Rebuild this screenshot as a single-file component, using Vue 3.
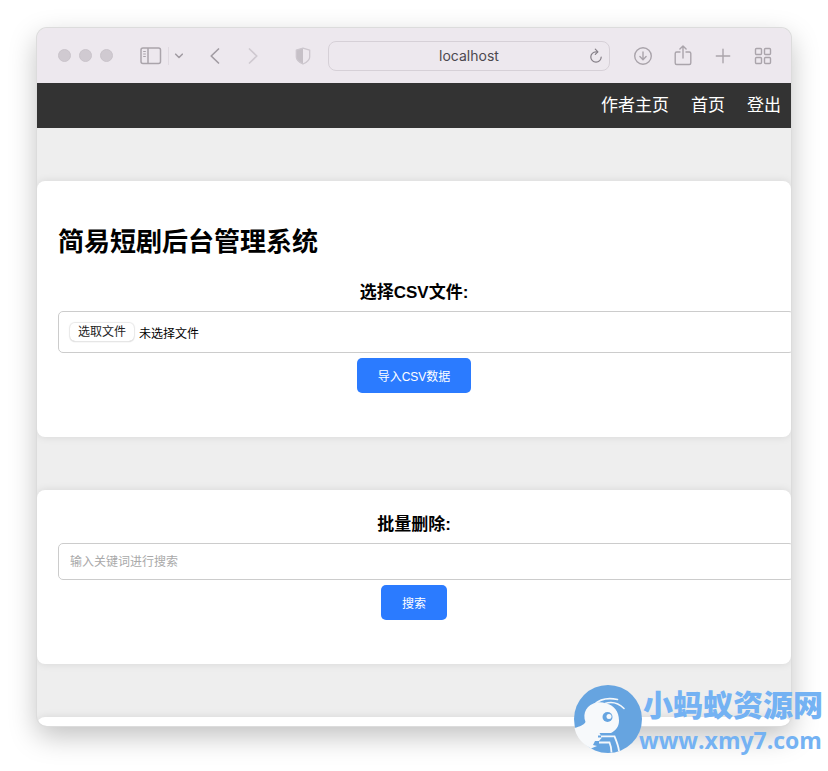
<script setup>
import { ref } from 'vue'

const navLinks = ['作者主页', '首页', '登出']
const fileName = ref('未选择文件')
const keyword = ref('')

function onFileChange(event) {
  const file = event.target.files[0]
  fileName.value = file ? file.name : '未选择文件'
}
</script>

<template>
  <div class="desktop">
    <div class="window">
      <header class="toolbar">
        <div class="lights"><i></i><i></i><i></i></div>
        <button class="tool sidebar" type="button" aria-label="边栏">
          <svg width="22" height="18" viewBox="0 0 22 18" fill="none" stroke="#aaa4ab" stroke-width="1.5">
            <rect x="1" y="1" width="19.5" height="15.5" rx="2" />
            <path d="M8 1v15.5" />
            <path d="M3.2 4.5h2.6M3.2 7h2.6M3.2 9.5h2.6" stroke-width="1" />
          </svg>
        </button>
        <span class="divider"></span>
        <button class="tool chevron" type="button" aria-label="标签页组">
          <svg width="10" height="8" viewBox="0 0 10 8" fill="none" stroke="#a29ca3" stroke-width="1.6" stroke-linecap="round" stroke-linejoin="round">
            <path d="M1.7 2.2 5 5.5l3.3-3.3" />
          </svg>
        </button>
        <button class="tool back" type="button" aria-label="后退">
          <svg width="12" height="18" viewBox="0 0 12 18" fill="none" stroke="#a29ca3" stroke-width="1.7" stroke-linecap="round" stroke-linejoin="round">
            <path d="M9.5 2 2.2 9l7.3 7" />
          </svg>
        </button>
        <button class="tool forward" type="button" aria-label="前进">
          <svg width="12" height="18" viewBox="0 0 12 18" fill="none" stroke="#cfc9d0" stroke-width="1.7" stroke-linecap="round" stroke-linejoin="round">
            <path d="M2.5 2 9.8 9l-7.3 7" />
          </svg>
        </button>
        <button class="tool shield" type="button" aria-label="隐私报告">
          <svg width="16" height="18" viewBox="0 0 16 18">
            <path d="M8 1 1.2 3v7c0 3.400 3 5.500 6.800 7.200z" fill="#c6c0c7" />
            <path d="M8 1.200 14.700 3.200v6.800c0 3.200-3 5.300-6.700 7-3.700-1.700-6.700-3.800-6.700-7V3.200z" fill="none" stroke="#cdc7ce" stroke-width="1.300" stroke-linejoin="round" />
          </svg>
        </button>
        <div class="address">
          <span class="host">localhost</span>
          <button class="tool" type="button" aria-label="重新载入">
            <svg width="14" height="16" viewBox="0 0 14 16" fill="none" stroke="#847e86" stroke-width="1.2" stroke-linecap="round" stroke-linejoin="round">
              <path d="M8.300 3.800H7a5.200 5.200 0 1 0 5.200 5.200" />
              <path d="M6.300 1.200 8.900 3.800 6.300 6.400" />
            </svg>
          </button>
        </div>
        <div class="actions">
          <button class="tool" type="button" aria-label="下载">
            <svg width="20" height="22" viewBox="0 0 20 22" fill="none" stroke="#aaa4ab" stroke-width="1.4" stroke-linecap="round" stroke-linejoin="round">
              <circle cx="10" cy="11" r="8.300" />
              <path d="M10 7v7.500M6.900 11.600 10 14.700l3.100-3.100" />
            </svg>
          </button>
          <button class="tool" type="button" aria-label="分享">
            <svg width="20" height="22" viewBox="0 0 20 22" fill="none" stroke="#aaa4ab" stroke-width="1.4" stroke-linecap="round" stroke-linejoin="round">
              <path d="M7 7H3.700a1.500 1.500 0 0 0-1.500 1.500v9.500a1.500 1.500 0 0 0 1.500 1.500h12.600a1.500 1.500 0 0 0 1.500-1.500V8.500A1.500 1.500 0 0 0 16.300 7H13" />
              <path d="M10 13V1.200M6.900 4.100 10 1l3.100 3.100" />
            </svg>
          </button>
          <button class="tool" type="button" aria-label="新标签页">
            <svg width="20" height="22" viewBox="0 0 20 22" fill="none" stroke="#aaa4ab" stroke-width="1.4" stroke-linecap="round">
              <path d="M10 4.300v13.400M3.300 11h13.400" />
            </svg>
          </button>
          <button class="tool" type="button" aria-label="标签页概览">
            <svg width="20" height="22" viewBox="0 0 20 22" fill="none" stroke="#aaa4ab" stroke-width="1.4">
              <rect x="2.500" y="3.500" width="6" height="6" rx="1" />
              <rect x="11.500" y="3.500" width="6" height="6" rx="1" />
              <rect x="2.500" y="12.500" width="6" height="6" rx="1" />
              <rect x="11.500" y="12.500" width="6" height="6" rx="1" />
            </svg>
          </button>
        </div>
      </header>

      <nav class="nav">
        <a v-for="link in navLinks" :key="link" href="#">{{ link }}</a>
      </nav>

      <main class="content">
        <section class="card import">
          <h1>简易短剧后台管理系统</h1>
          <form class="form" @submit.prevent>
            <label class="title" for="csv">选择CSV文件:</label>
            <div class="field file">
              <input id="csv" class="native-file" type="file" accept=".csv" @change="onFileChange" />
              <label class="pick" for="csv">选取文件</label>
              <span>{{ fileName }}</span>
            </div>
            <button class="primary" type="submit">导入CSV数据</button>
          </form>
        </section>

        <section class="card remove">
          <form class="form" @submit.prevent>
            <label class="title" for="keyword">批量删除:</label>
            <input id="keyword" v-model="keyword" class="field text" type="text" placeholder="输入关键词进行搜索" />
            <button class="primary" type="submit">搜索</button>
          </form>
        </section>

        <section class="card next"></section>
      </main>
    </div>

    <div class="watermark">
      <svg width="70" height="70" viewBox="0 0 70 70">
        <circle cx="35" cy="35" r="34" fill="#66a4e0" />
        <path d="M1.500 44C7 42.500 11 41 12.500 38 9 29 14 20 24 18.500c3-.6 6-.2 9 1 8 1.500 13 8 13 17 0 6-3 10-8 12.500H26.500l1.500 2.500h-3v2h4L26 57h-4l-2 4 4 1-6 2.500-4-2.500C7 57.500 3 51 1.500 44z" fill="#f7f9fb" />
        <path d="M21 20.500C27 15 35 13.500 44.500 15.500M32 19.500c8-2.500 14 0 19 5" fill="none" stroke="#f3f7fb" stroke-width="1.600" stroke-linecap="round" />
        <path d="M28 52.300H41.500C43.500 57 45.500 62 46 67M26 58.500H36.500C38 62 38.500 65 38.500 68.500" fill="none" stroke="#f3f7fb" stroke-width="1.800" />
        <circle cx="34.500" cy="33" r="5" fill="#66a4e0" />
        <circle cx="36" cy="32.500" r="2.500" fill="#f7f9fb" />
      </svg>
      <div class="mark-text">
        <strong>小蚂蚁资源网</strong>
        <span>www.xmy7.com</span>
      </div>
    </div>
  </div>
</template>

<style>
body {
  margin: 0;
  background: #fff;
}
</style>

<style scoped>
.desktop {
  position: relative;
  box-sizing: border-box;
  min-height: 100vh;
  padding: 28px 37px 45px;
  overflow: hidden;
  font-family: "Liberation Sans", "Noto Sans CJK SC", sans-serif;
  color: #000;
}

.window {
  overflow: hidden;
  border-radius: 10px;
  background: #eee;
  box-shadow: 0 0 0 1px #dcdcdc, 0 10px 28px rgba(0, 0, 0, 0.25);
}

button {
  border: 0;
  font-family: inherit;
  cursor: pointer;
}

.toolbar {
  display: flex;
  align-items: center;
  height: 55px;
  padding: 0 18px 0 21px;
  box-sizing: border-box;
  background: #ede8ee;
}

.lights {
  display: flex;
  gap: 8px;
  margin-right: 27px;
}

.lights i {
  width: 13px;
  height: 13px;
  border: 1px solid #cac4cb;
  border-radius: 50%;
  box-sizing: border-box;
  background: #d0cad1;
}

.tool {
  display: flex;
  flex: none;
  padding: 0;
  background: none;
}

.divider {
  width: 1px;
  height: 18px;
  margin: 0 5px 0 6px;
  background: #e0dae1;
}

.back {
  margin-left: 25px;
}

.forward {
  margin-left: 26px;
}

.shield {
  margin: 0 17px 0 36px;
}

.address {
  display: flex;
  flex: 1;
  align-items: center;
  height: 30px;
  padding: 0 6px 0 20px;
  border: 1px solid #d6d0d7;
  border-radius: 8px;
  box-sizing: border-box;
}

.host {
  flex: 1;
  font: 14px Inter, sans-serif;
  text-align: center;
  color: #4c484e;
}

.actions {
  display: flex;
  gap: 20px;
  margin-left: 23px;
}

.nav {
  display: flex;
  justify-content: flex-end;
  align-items: center;
  gap: 22px;
  height: 45px;
  padding: 0 10px;
  background: #333;
}

.nav a {
  font-size: 17px;
  line-height: 24px;
  color: #fff;
  text-decoration: none;
}

.content {
  display: flex;
  flex-direction: column;
  gap: 53px;
  padding-top: 53px;
}

.card {
  padding: 0 21px;
  border-radius: 8px;
  background: #fff;
  box-shadow: 0 0 8px rgba(0, 0, 0, 0.1);
}

.import {
  padding-top: 43px;
  padding-bottom: 44px;
}

.remove {
  padding-top: 23px;
  padding-bottom: 44px;
}

.next {
  height: 9px;
  border-radius: 8px 8px 0 0;
}

h1 {
  margin: 0 0 21px;
  font-size: 26px;
  line-height: 36px;
}

.form {
  display: flex;
  flex-direction: column;
  align-items: center;
}

.title {
  margin-bottom: 6px;
  font-size: 17px;
  font-weight: bold;
  line-height: 24px;
}

.field {
  align-self: flex-start;
  width: calc(100% + 24px);
  margin: 0 0 5px;
  padding: 0 11px;
  border: 1px solid #ccc;
  border-radius: 5px;
  box-sizing: border-box;
  background: #fff;
  font-family: inherit;
  font-size: 12px;
}

.file {
  display: flex;
  align-items: center;
  gap: 5px;
  height: 42px;
}

.native-file {
  position: absolute;
  width: 1px;
  height: 1px;
  opacity: 0;
}

.pick {
  padding: 0 8px;
  border-radius: 5px;
  line-height: 18px;
  color: #222;
  box-shadow: 0 0 1px 1px #e8e8e8, 0 1px 1px #ccc;
}

.text {
  height: 37px;
}

.text::placeholder {
  color: #a9a9a9;
  opacity: 1;
}

.primary {
  height: 35px;
  padding: 0 21px;
  border-radius: 5px;
  background: #2b7bff;
  font-size: 12px;
  color: #fff;
}

.watermark {
  position: absolute;
  right: 5px;
  bottom: 17px;
  display: flex;
  color: #74b2f3;
}

.mark-text {
  display: flex;
  flex-direction: column;
  margin-left: -4px;
}

.mark-text strong {
  padding: 2px 0 0 4px;
  font-size: 30px;
  font-weight: 900;
  line-height: 40px;
}

.mark-text span {
  font: bold 23px/28px "Open Sans", sans-serif;
}
</style>
